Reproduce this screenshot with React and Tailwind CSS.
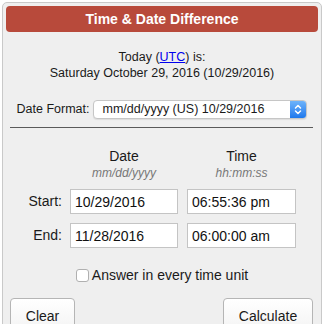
import React from "react";

function SelectArrows() {
  return (
    <svg width="8" height="11" viewBox="0 0 8 11" fill="none" stroke="white" strokeWidth="1.5" strokeLinecap="round" strokeLinejoin="round">
      <path d="M1.5 4 L4 1.5 L6.5 4" />
      <path d="M1.5 7 L4 9.5 L6.5 7" />
    </svg>
  );
}

function Field({ value }) {
  return (
    <input
      readOnly
      value={value}
      className="h-[25px] w-full border border-[#c4c4c4] bg-white pl-[4px] text-[14px] text-[#111] outline-none"
    />
  );
}

export default function App() {
  return (
    <div className="h-[324px] w-[324px] overflow-hidden bg-white pl-[2px] pt-[2px] font-['Liberation_Sans',Arial,sans-serif] text-[#1a1a1a]">
      <div className="h-[340px] w-[320px] rounded-[5px] border border-[#c9c9c9] bg-[#efefef] p-[3px]">
        <div className="flex h-[26px] items-center justify-center rounded-[4px] bg-[#b84a3b] text-[14px] font-bold text-white">
          Time &amp; Date Difference
        </div>

        <div className="mt-[17px] text-center text-[12.5px] leading-[16px]">
          <div>
            Today (<a href="#" className="text-[#0000ee] underline">UTC</a>) is:
          </div>
          <div>Saturday October 29, 2016 (10/29/2016)</div>
        </div>

        <div className="mt-[19px] flex items-center justify-center gap-[4px] text-[12.5px]">
          <span>Date Format:</span>
          <div className="flex h-[19px] w-[214px] items-center overflow-hidden rounded-[4px] border border-[#c6c6c6] bg-white shadow-[0_1px_1px_rgba(0,0,0,0.08)]">
            <span className="flex-1 pl-[8px]">mm/dd/yyyy (US) 10/29/2016</span>
            <span className="flex h-full w-[16px] items-center justify-center bg-gradient-to-b from-[#6db3fb] to-[#1c78ec]">
              <SelectArrows />
            </span>
          </div>
        </div>

        <div className="ml-[4px] mr-[5px] mt-[8px] h-px bg-[#5a5a5a]" />

        <div className="ml-[8px] mt-[19px] grid grid-cols-[48px_108px_110px] items-center gap-x-[8px] text-[14px]">
          <div />
          <div className="text-center leading-[18px]">Date</div>
          <div className="ml-[1px] text-center leading-[18px]">Time</div>
          <div />
          <div className="text-center text-[12px] italic leading-[16px] text-[#777]">mm/dd/yyyy</div>
          <div className="ml-[1px] text-center text-[12px] italic leading-[16px] text-[#777]">hh:mm:ss</div>

          <div className="mt-[8px] text-right">Start:</div>
          <div className="mt-[8px]"><Field value="10/29/2016" /></div>
          <div className="ml-[1px] mt-[8px]"><Field value="06:55:36 pm" /></div>

          <div className="mt-[9px] text-right">End:</div>
          <div className="mt-[9px]"><Field value="11/28/2016" /></div>
          <div className="ml-[1px] mt-[9px]"><Field value="06:00:00 am" /></div>
        </div>

        <label className="mt-[18px] flex items-center justify-center gap-[3px] text-[14px] leading-[18px]">
          <input type="checkbox" className="h-[13px] w-[13px] appearance-none rounded-[3px] border border-[#b0b0b0] bg-white" />
          <span>Answer in every time unit</span>
        </label>

        <div className="ml-[4px] mr-[5px] mt-[14px] flex justify-between text-[14px]">
          <button className="flex h-[36px] w-[65px] items-center justify-center rounded-[4px] border border-[#b5b5b5] bg-gradient-to-b from-white to-[#f3f3f3]">
            Clear
          </button>
          <button className="flex h-[36px] w-[90px] items-center justify-center rounded-[4px] border border-[#b5b5b5] bg-gradient-to-b from-white to-[#f3f3f3]">
            Calculate
          </button>
        </div>
      </div>
    </div>
  );
}
